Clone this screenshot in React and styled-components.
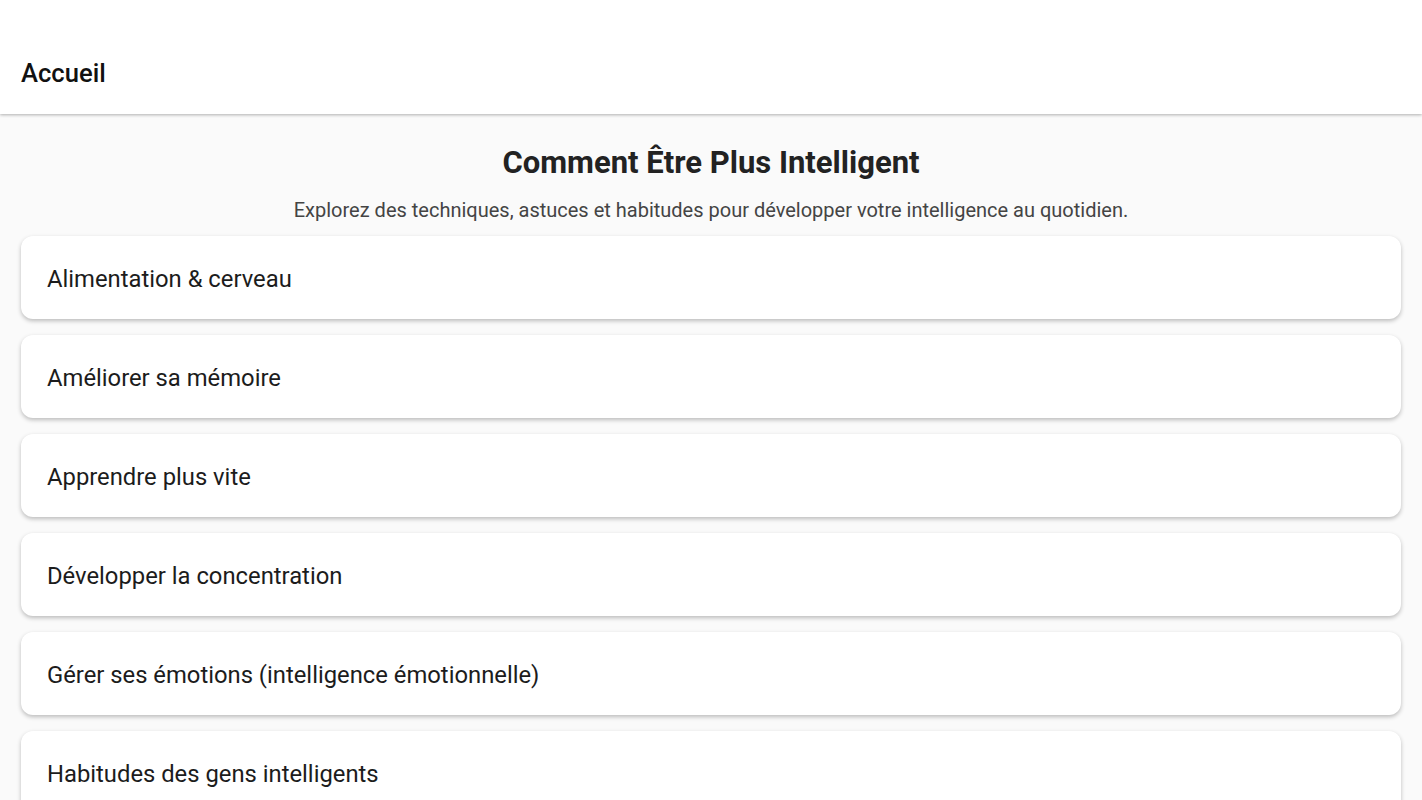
import React from "react";
import styled, { createGlobalStyle } from "styled-components";

const GlobalStyle = createGlobalStyle`
  html, body {
    margin: 0;
    padding: 0;
    background: #fafafa;
    font-family: Roboto, "Noto Sans", sans-serif;
    overflow: hidden;
  }
`;

const Page = styled.div`
  min-height: 800px;
  background: #fafafa;
`;

const AppBar = styled.header`
  height: 114px;
  background: #ffffff;
  display: flex;
  align-items: flex-end;
  padding: 0 21px 26px;
  box-sizing: border-box;
  box-shadow: 0 1px 3px rgba(0, 0, 0, 0.3);
  position: relative;
  z-index: 1;
`;

const AppTitle = styled.h1`
  margin: 0;
  font-size: 25.6px;
  font-weight: 500;
  color: #111;
`;

const Content = styled.main`
  padding: 29px 21px 0;
  display: flex;
  flex-direction: column;
`;

const Title = styled.h2`
  margin: 0;
  text-align: center;
  font-size: 31px;
  font-weight: 700;
  color: #222;
  line-height: 40px;
`;

const Subtitle = styled.p`
  margin: 15px 0 14px;
  text-align: center;
  font-size: 20px;
  color: #444;
  line-height: 24px;
`;

const List = styled.div`
  display: flex;
  flex-direction: column;
  gap: 16px;
`;

const Card = styled.div`
  height: 83px;
  box-sizing: border-box;
  background: #fff;
  border-radius: 12px;
  box-shadow: 0 2px 4px rgba(0, 0, 0, 0.25);
  display: flex;
  align-items: center;
  padding: 2px 26px 0;
  font-size: 23.8px;
  color: #1c1c1c;
`;

const topics = [
  "Alimentation & cerveau",
  "Améliorer sa mémoire",
  "Apprendre plus vite",
  "Développer la concentration",
  "Gérer ses émotions (intelligence émotionnelle)",
  "Habitudes des gens intelligents",
];

export default function App() {
  return (
    <Page>
      <GlobalStyle />
      <AppBar>
        <AppTitle>Accueil</AppTitle>
      </AppBar>
      <Content>
        <Title>Comment Être Plus Intelligent</Title>
        <Subtitle>
          Explorez des techniques, astuces et habitudes pour développer votre intelligence au quotidien.
        </Subtitle>
        <List>
          {topics.map((t) => (
            <Card key={t}>{t}</Card>
          ))}
        </List>
      </Content>
    </Page>
  );
}
